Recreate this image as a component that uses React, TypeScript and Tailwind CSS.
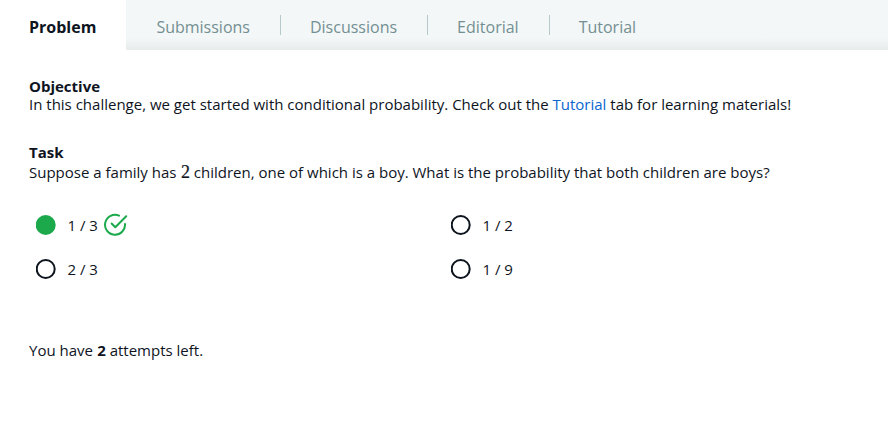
import React from "react";

const tabs = ["Submissions", "Discussions", "Editorial", "Tutorial"];

function Radio({ selected = false }: { selected?: boolean }) {
  return (
    <svg className="size-5 shrink-0" viewBox="0 0 20 20" fill="none">
      {selected ? (
        <circle cx="9.7" cy="10" r="10" fill="#1ba94c" />
      ) : (
        <circle cx="9.7" cy="10" r="9" stroke="#0e141e" strokeWidth="2" />
      )}
    </svg>
  );
}

function CorrectIcon() {
  return (
    <svg
      className="ml-1.5 h-6 w-6 shrink-0"
      viewBox="0 0 24 24"
      fill="none"
      stroke="#1ba94c"
      strokeWidth="2"
      strokeLinecap="round"
      strokeLinejoin="round"
    >
      <path d="M15 2.6A10 10 0 1 0 21 10.9" />
      <path d="M7.6 10.5l3.7 3.7L22.2 3.3" />
    </svg>
  );
}

function Option({ label, selected = false }: { label: string; selected?: boolean }) {
  return (
    <div className="flex h-11 items-center pl-[6.5px]">
      <Radio selected={selected} />
      <span className="ml-3 -mt-px">{label}</span>
      {selected && <CorrectIcon />}
    </div>
  );
}

export default function App() {
  return (
    <main className="h-[434px] w-full overflow-hidden bg-white font-['Open_Sans',sans-serif] text-[15px] leading-[18px] text-[#0e141e]">
      <nav className="flex h-[50px] bg-[#f3f7f7] bg-linear-to-b from-[#f3f7f7] from-75% to-[#e7eceb] text-base leading-5">
        <button className="bg-white pt-1 pr-[30px] pl-[29px] font-bold">Problem</button>
        <div className="flex items-center text-[#738f93]">
          {tabs.map((tab, i) => (
            <React.Fragment key={tab}>
              {i > 0 && <span className="-mr-px h-5 w-px bg-[#b7c9cc]" />}
              <button className="px-[30px] pt-1">{tab}</button>
            </React.Fragment>
          ))}
        </div>
      </nav>
      <div className="px-[29px] pt-[27px]">
        <section>
          <h2 className="font-bold">Objective</h2>
          <p>
            In this challenge, we get started with conditional probability. Check out the{" "}
            <a className="text-[#0b66d0]">Tutorial</a> tab for learning materials!
          </p>
        </section>
        <section className="mt-[30px]">
          <h2 className="font-bold">Task</h2>
          <p className="mt-0.5">
            Suppose a family has{" "}
            <span className="ml-[0.6px] font-['Liberation_Serif',serif] text-[18px] leading-none [-webkit-text-stroke:0.2px]">2</span>{" "}
            children, one of which is a boy. What is the probability that both children are boys?
          </p>
        </section>
        <div className="mt-[22px] grid grid-cols-2">
          <Option label="1 / 3" selected />
          <Option label="1 / 2" />
          <Option label="2 / 3" />
          <Option label="1 / 9" />
        </div>
        <p className="mt-[50px]">
          You have <b className="ml-[0.3px]">2</b> attempts left.
        </p>
      </div>
    </main>
  );
}
